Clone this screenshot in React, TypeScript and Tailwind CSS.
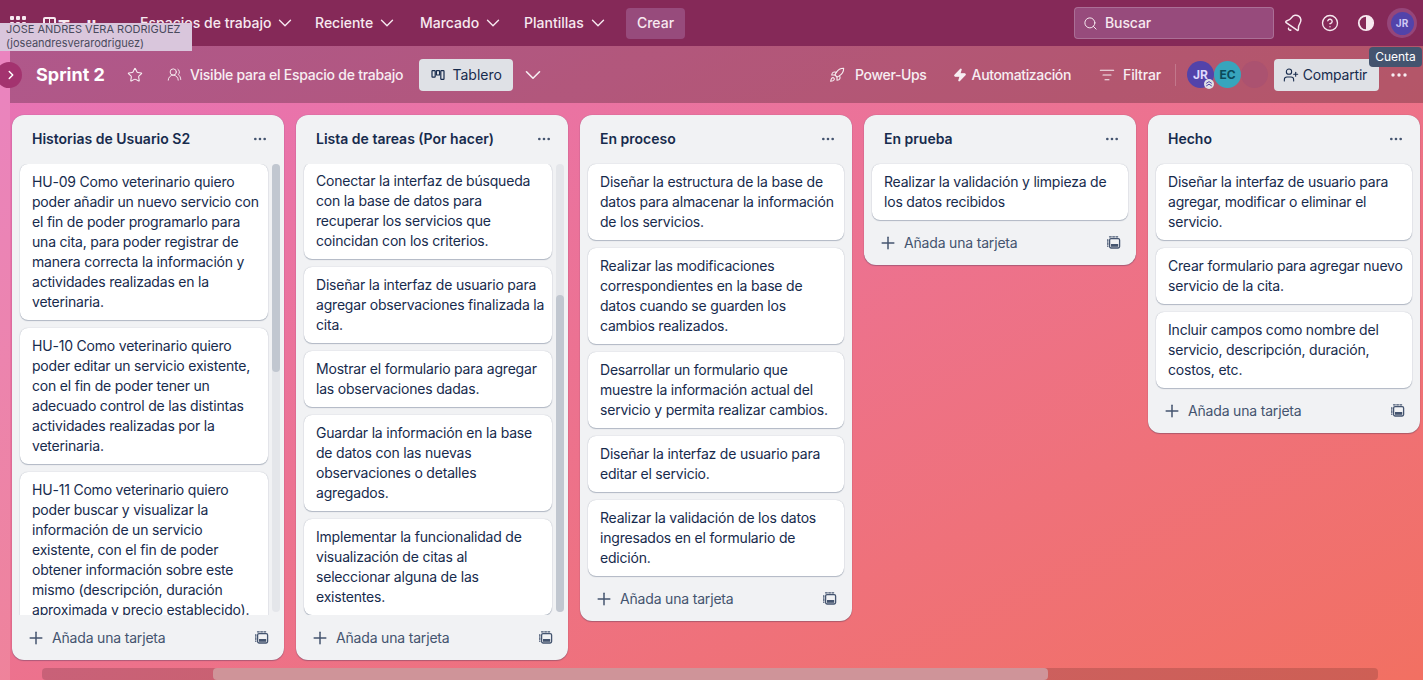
import React from 'react';
import {
  Bell,
  ChevronDown,
  ChevronRight,
  CircleHelp,
  Ellipsis,
  ListFilter,
  Plus,
  Rocket,
  Search,
  Star,
  UserPlus,
  UsersRound,
  Zap,
} from 'lucide-react';

const lists = [
  {
    title: 'Historias de Usuario S2',
    scroll: { offset: 'mt-0', thumbTop: 'mt-0', thumbH: 'h-[208px]' },
    cards: [
      'HU-09 Como veterinario quiero poder añadir un nuevo servicio con el fin de poder programarlo para una cita, para poder registrar de manera correcta la información y actividades realizadas en la veterinaria.',
      'HU-10 Como veterinario quiero poder editar un servicio existente, con el fin de poder tener un adecuado control de las distintas actividades realizadas por la veterinaria.',
      'HU-11 Como veterinario quiero poder buscar y visualizar la información de un servicio existente, con el fin de poder obtener información sobre este mismo (descripción, duración aproximada y precio establecido).',
    ],
  },
  {
    title: 'Lista de tareas (Por hacer)',
    scroll: { offset: '-mt-px', thumbTop: 'mt-[131px]', thumbH: 'h-[317px]' },
    cards: [
      'Conectar la interfaz de búsqueda con la base de datos para recuperar los servicios que coincidan con los criterios.',
      'Diseñar la interfaz de usuario para agregar observaciones finalizada la cita.',
      'Mostrar el formulario para agregar las observaciones dadas.',
      'Guardar la información en la base de datos con las nuevas observaciones o detalles agregados.',
      'Implementar la funcionalidad de visualización de citas al seleccionar alguna de las existentes.',
    ],
  },
  {
    title: 'En proceso',
    cards: [
      'Diseñar la estructura de la base de datos para almacenar la información de los servicios.',
      'Realizar las modificaciones correspondientes en la base de datos cuando se guarden los cambios realizados.',
      'Desarrollar un formulario que muestre la información actual del servicio y permita realizar cambios.',
      'Diseñar la interfaz de usuario para editar el servicio.',
      'Realizar la validación de los datos ingresados en el formulario de edición.',
    ],
  },
  {
    title: 'En prueba',
    cards: ['Realizar la validación y limpieza de los datos recibidos'],
  },
  {
    title: 'Hecho',
    cards: [
      'Diseñar la interfaz de usuario para agregar, modificar o eliminar el servicio.',
      'Crear formulario para agregar nuevo servicio de la cita.',
      'Incluir campos como nombre del servicio, descripción, duración, costos, etc.',
    ],
  },
];

function TemplateIcon() {
  return (
    <svg width="14" height="14" viewBox="0 0 14 14" fill="none" className="text-[#44546f]">
      <rect x="2.6" y="2.6" width="10" height="9.4" rx="1.4" stroke="currentColor" strokeWidth="1.3" />
      <rect x="4" y="8" width="7.2" height="2.8" fill="currentColor" />
      <path d="M.8 3.5v7M2.5.8h9" stroke="currentColor" strokeWidth="1.2" strokeLinecap="round" strokeDasharray="1.8 1.4" />
    </svg>
  );
}

function BoardIcon() {
  return (
    <svg width="14" height="14" viewBox="0 0 14 14" fill="none" stroke="currentColor" strokeWidth="1.2">
      <rect x="1" y="2.6" width="3.2" height="6.6" rx="0.6" />
      <rect x="5.4" y="2.6" width="3.2" height="4.4" rx="0.6" />
      <rect x="9.8" y="2.6" width="3.2" height="8.8" rx="0.6" />
    </svg>
  );
}

function ContrastIcon() {
  return (
    <svg width="18" height="18" viewBox="0 0 18 18" className="ml-[18px]">
      <circle cx="9" cy="9" r="7.2" fill="none" stroke="currentColor" strokeWidth="1.8" />
      <path d="M9 1.8a7.2 7.2 0 0 1 0 14.4z" fill="currentColor" />
    </svg>
  );
}

function DotsIcon() {
  return (
    <svg width="16" height="4" viewBox="0 0 16 4" fill="currentColor" className="ml-[12px]">
      <circle cx="2" cy="2" r="1.7" />
      <circle cx="8" cy="2" r="1.7" />
      <circle cx="14" cy="2" r="1.7" />
    </svg>
  );
}

function AdminBadge() {
  return (
    <svg width="10" height="10" viewBox="0 0 10 10" fill="none" className="absolute -bottom-px right-0">
      <circle cx="5" cy="5" r="5" fill="#dfe1e6" />
      <path d="M2.2 4.4 5 2.6l2.8 1.8M2.2 7 5 5.2 7.8 7" stroke="#5243aa" strokeWidth="1" />
    </svg>
  );
}

function Card({ text }: { text: string }) {
  return (
    <div className="rounded-lg bg-white py-2 pl-3 pr-[7px] text-sm leading-5 tracking-[-0.2px] text-[#172b4d] shadow-[0_1px_1px_#091e4240,0_0_1px_#091e424f]">
      {text}
    </div>
  );
}

function BoardList({ list }: { list: (typeof lists)[number] }) {
  const cards = (
    <div className="flex flex-col gap-2">
      {list.cards.map((c) => (
        <Card key={c} text={c} />
      ))}
    </div>
  );

  return (
    <div className="flex w-[272px] shrink-0 flex-col self-start rounded-xl bg-[#f1f2f4] shadow-[0_1px_1px_#091e4240,0_0_1px_#091e424f]">
      <div className="flex h-[49px] shrink-0 items-center justify-between pb-[2px] pl-5 pr-4">
        <h2 className="text-sm font-semibold text-[#172b4d]">{list.title}</h2>
        <Ellipsis size={16} className="text-[#44546f]" />
      </div>

      {list.scroll ? (
        <div className="flex h-[451px] overflow-hidden pl-2 pr-1">
          <div className={`w-[248px] shrink-0 ${list.scroll.offset}`}>{cards}</div>
          <div className="ml-1 h-[448px] w-2 shrink-0 rounded bg-[#e4e6ea]">
            <div className={`${list.scroll.thumbTop} ${list.scroll.thumbH} rounded bg-[#c1c7d0]`} />
          </div>
        </div>
      ) : (
        <div className="px-2">{cards}</div>
      )}

      <div className="flex h-[45px] shrink-0 items-center justify-between pl-[14px] pr-[15px] text-sm tracking-[-0.18px] text-[#44546f]">
        <div className="flex items-center gap-[6px]">
          <Plus size={20} strokeWidth={1.8} />
          <span>Añada una tarjeta</span>
        </div>
        <TemplateIcon />
      </div>
    </div>
  );
}

function NavMenu({ label, className }: { label: string; className: string }) {
  return (
    <div className={`flex items-center gap-[3px] ${className}`}>
      <span>{label}</span>
      <ChevronDown size={22} strokeWidth={1.5} />
    </div>
  );
}

export default function App() {
  return (
    <div
      className="relative flex h-screen w-full flex-col overflow-hidden bg-linear-[155deg,#e774bb,#f27062] text-white"
      style={{ fontFamily: 'Inter, "Noto Sans", sans-serif' }}
    >
      {/* top nav */}
      <nav className="flex h-[46px] shrink-0 items-center bg-[#852958] text-sm font-medium text-[#f7e9f0]">
        <div className="flex w-[140px] items-start self-start pl-[10px] pt-[16px]">
          <div className="grid grid-cols-3 gap-[2px]">
            {Array.from({ length: 9 }).map((_, i) => (
              <span key={i} className="h-1 w-1 rounded-[1px] bg-[#f7e9f0]" />
            ))}
          </div>
          <div className="ml-[17px] mt-px flex h-[13px] w-[13px] gap-px rounded-[2px] bg-[#f7e9f0] p-[2px]">
            <span className="h-[8px] w-1 bg-[#852958]" />
            <span className="h-[5px] w-1 bg-[#852958]" />
          </div>
          <span className="ml-[2px] -mt-[3px] text-lg font-bold text-[#f7e9f0]">Trello</span>
        </div>
        <NavMenu label="Espacios de trabajo" className="w-[175px]" />
        <NavMenu label="Reciente" className="w-[105px]" />
        <NavMenu label="Marcado" className="w-[104px]" />
        <NavMenu label="Plantillas" className="w-[102px]" />
        <button className="flex h-[31px] w-[59px] items-center justify-center rounded bg-[#974b7c]">Crear</button>

        <div className="ml-auto flex items-center pr-[6px]">
          <div className="flex h-[32px] w-[200px] items-center gap-[7px] rounded border border-[#ffffff33] bg-[#974b7c] pl-[8px]">
            <Search size={15} strokeWidth={1.6} />
            <span className="tracking-[-0.1px]">Buscar</span>
          </div>
          <Bell size={20} strokeWidth={1.8} className="ml-[10px] rotate-[35deg]" />
          <CircleHelp size={18} strokeWidth={1.8} className="ml-[17px]" />
          <ContrastIcon />
          <div className="ml-[12px] flex h-[30px] w-[30px] items-center justify-center rounded-full bg-[#95467a]">
            <div className="flex h-[23px] w-[23px] items-center justify-center rounded-full bg-[#5243aa] text-[10px] font-bold text-[#cfc9f5]">
              JR
            </div>
          </div>
        </div>
      </nav>

      {/* sidebar strip + board */}
      <div className="flex min-h-0 flex-1">
        <div className="w-[10px] shrink-0 bg-[#ffffff1f]" />
        <div className="flex min-w-0 flex-1 flex-col">
          <header className="flex h-[57px] shrink-0 items-center bg-[#0000003d] pl-[26px] pr-[16px] text-sm font-medium text-[#f7eef2]">
            <h1 className="text-lg font-bold leading-none text-white">Sprint 2</h1>
            <Star size={16} strokeWidth={1.6} className="ml-[22px]" />
            <UsersRound size={15} strokeWidth={1.5} className="ml-[24px]" />
            <span className="ml-2 tracking-[-0.25px]">Visible para el Espacio de trabajo</span>
            <button className="ml-4 flex h-8 w-[94px] items-center justify-center gap-2 rounded bg-[#dfe1e6] font-normal text-[#172b4d]">
              <BoardIcon />
              Tablero
            </button>
            <ChevronDown size={26} strokeWidth={1.5} className="ml-[7px]" />

            <div className="ml-auto flex items-center">
              <Rocket size={16} strokeWidth={1.6} />
              <span className="ml-[10px] tracking-[-0.35px]">Power-Ups</span>
              <Zap size={14} fill="currentColor" className="ml-[26px]" />
              <span className="ml-[5px] tracking-[-0.35px]">Automatización</span>
              <ListFilter size={16} strokeWidth={1.6} className="ml-[28px]" />
              <span className="ml-2 tracking-[-0.15px]">Filtrar</span>
              <div className="ml-[14px] h-[22px] w-px bg-[#ffffff33]" />
              <div className="relative ml-[11px] flex h-[27px] w-[27px] items-center justify-center rounded-full bg-[#5243aa] text-xs font-bold text-[#dfd8fd]">
                JR
                <AdminBadge />
              </div>
              <div className="flex h-[27px] w-[27px] items-center justify-center rounded-full bg-[#37a5bd] text-xs font-bold text-[#0c4a5a]">
                EC
              </div>
              <div className="h-[27px] w-[27px] rounded-full bg-[#ab5270]" />
              <button className="ml-[6px] flex h-8 w-[105px] items-center justify-center gap-1 rounded bg-[#dfe1e6] pr-[3px] font-normal tracking-[-0.2px] text-[#172b4d]">
                <UserPlus size={16} strokeWidth={1.6} />
                Compartir
              </button>
              <DotsIcon />
            </div>
          </header>

          <main className="flex h-[557px] shrink-0 gap-3 pl-[2px] pt-3">
            {lists.map((l) => (
              <BoardList key={l.title} list={l} />
            ))}
          </main>

          {/* horizontal scrollbar */}
          <div className="ml-[32px] mt-2 h-3 w-[1336px] rounded bg-[#00000026]">
            <div className="ml-[171px] h-3 w-[835px] rounded bg-[#cf9499]" />
          </div>
        </div>
      </div>

      {/* overlays */}
      <button className="absolute left-[-4px] top-[62px] flex h-[26px] w-[26px] items-center justify-center rounded-full bg-[#a3336f] pl-1">
        <ChevronRight size={14} strokeWidth={2.5} />
      </button>
      <div className="absolute left-0 top-[23px] h-[28px] w-[192px] bg-[#d9c6dc] pl-[6px] text-[11px] leading-[14px] text-[#4a4a5c]">
        <div className="-mt-px">JOSE ANDRES VERA RODRIGUEZ</div>
        <div>(joseandresverarodriguez)</div>
      </div>
      <div className="absolute left-[1369px] top-[47px] flex h-5 w-[53px] items-center justify-center rounded bg-[#44546f] text-xs text-white">
        Cuenta
      </div>
    </div>
  );
}
